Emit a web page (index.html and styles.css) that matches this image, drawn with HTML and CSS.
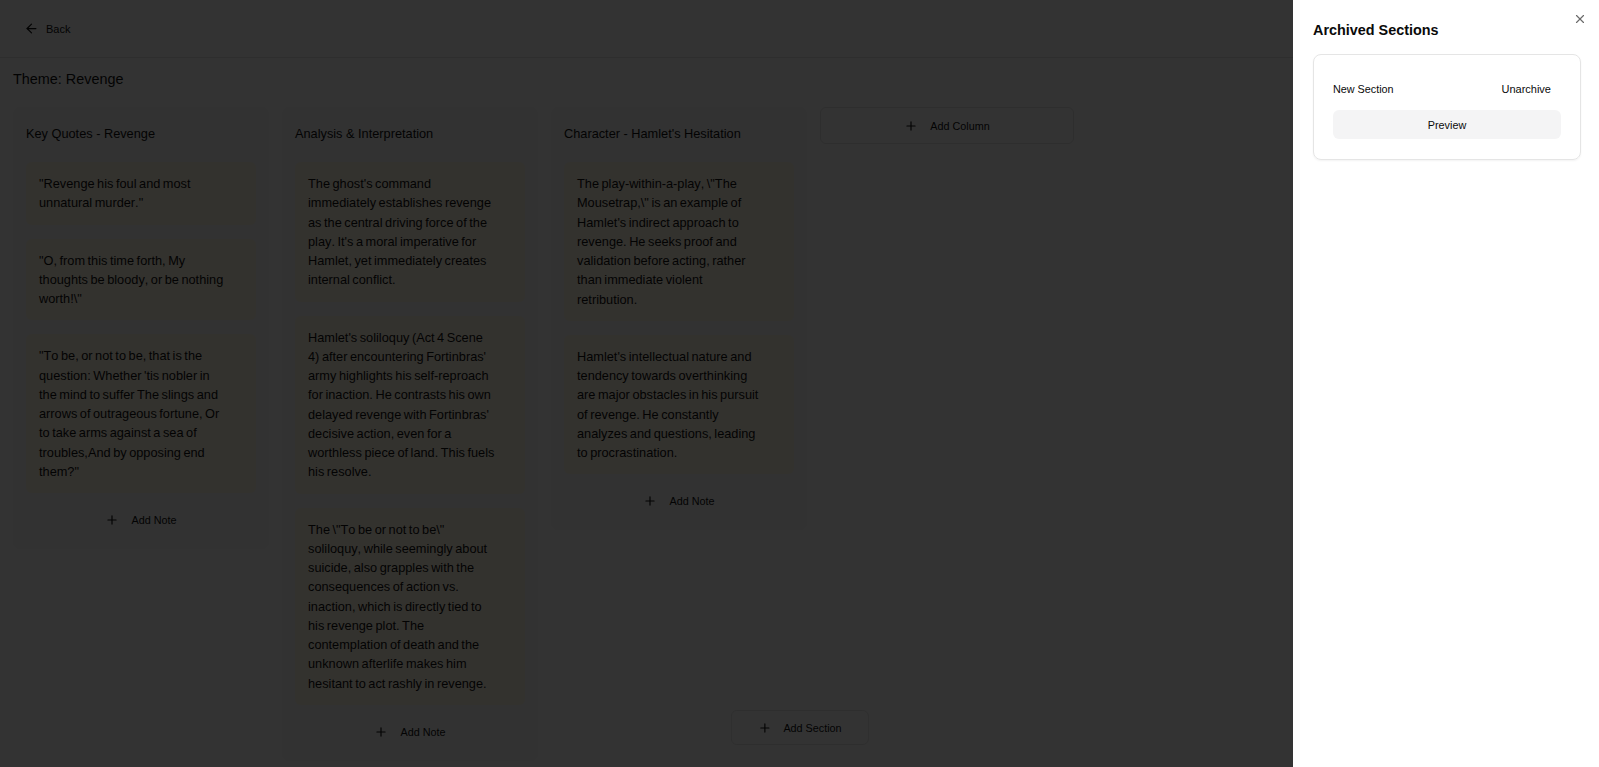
FILE: index.html
```html
<!DOCTYPE html>
<html lang="en">
<head>
<meta charset="utf-8">
<title>Theme: Revenge</title>
<link rel="stylesheet" href="styles.css">
</head>
<body>
<div class="app">
  <header class="topbar">
    <button class="back-btn" type="button">
      <svg class="icon" viewBox="0 0 24 24" width="15" height="15"><path d="m12 19-7-7 7-7"/><path d="M19 12H5"/></svg>
      <span>Back</span>
    </button>
  </header>

  <main class="board-page">
    <h1 class="theme-title">Theme: Revenge</h1>
    <div class="board">
      <section class="column">
        <h2 class="column-title">Key Quotes - Revenge</h2>
        <div class="note"><p>"Revenge his foul and most unnatural murder."</p></div>
        <div class="note"><p>"O, from this time forth, My thoughts be bloody, or be nothing worth!\"</p></div>
        <div class="note"><p>"To be, or not to be, that is the question: Whether 'tis nobler in the mind to suffer The slings and arrows of outrageous fortune, Or to take arms against a sea of troubles,And by opposing end them?"</p></div>
        <button class="add-note" type="button">
          <svg class="icon" viewBox="0 0 24 24" width="14" height="14"><path d="M5 12h14"/><path d="M12 5v14"/></svg>
          <span>Add Note</span>
        </button>
      </section>

      <section class="column">
        <h2 class="column-title">Analysis &amp; Interpretation</h2>
        <div class="note"><p>The ghost's command immediately establishes revenge as the central driving force of the play. It's a moral imperative for Hamlet, yet immediately creates internal conflict.</p></div>
        <div class="note"><p>Hamlet's soliloquy (Act 4 Scene 4) after encountering Fortinbras' army highlights his self-reproach for inaction. He contrasts his own delayed revenge with Fortinbras' decisive action, even for a worthless piece of land. This fuels his resolve.</p></div>
        <div class="note"><p>The \"To be or not to be\" soliloquy, while seemingly about suicide, also grapples with the consequences of action vs. inaction, which is directly tied to his revenge plot. The contemplation of death and the unknown afterlife makes him hesitant to act rashly in revenge.</p></div>
        <button class="add-note" type="button">
          <svg class="icon" viewBox="0 0 24 24" width="14" height="14"><path d="M5 12h14"/><path d="M12 5v14"/></svg>
          <span>Add Note</span>
        </button>
      </section>

      <section class="column">
        <h2 class="column-title">Character - Hamlet's Hesitation</h2>
        <div class="note"><p>The play-within-a-play, \"The Mousetrap,\" is an example of Hamlet's indirect approach to revenge. He seeks proof and validation before acting, rather than immediate violent retribution.</p></div>
        <div class="note"><p>Hamlet's intellectual nature and tendency towards overthinking are major obstacles in his pursuit of revenge. He constantly analyzes and questions, leading to procrastination.</p></div>
        <button class="add-note" type="button">
          <svg class="icon" viewBox="0 0 24 24" width="14" height="14"><path d="M5 12h14"/><path d="M12 5v14"/></svg>
          <span>Add Note</span>
        </button>
      </section>

      <button class="add-column" type="button">
        <svg class="icon" viewBox="0 0 24 24" width="14" height="14"><path d="M5 12h14"/><path d="M12 5v14"/></svg>
        <span>Add Column</span>
      </button>
    </div>
  </main>

  <button class="add-section" type="button">
    <svg class="icon" viewBox="0 0 24 24" width="14" height="14"><path d="M5 12h14"/><path d="M12 5v14"/></svg>
    <span>Add Section</span>
  </button>
</div>

<div class="overlay"></div>

<aside class="sheet" role="dialog" aria-label="Archived Sections">
  <h2 class="sheet-title">Archived Sections</h2>
  <button class="sheet-close" type="button" aria-label="Close">
    <svg class="icon" viewBox="0 0 24 24" width="14" height="14"><path d="M18 6 6 18"/><path d="m6 6 12 12"/></svg>
  </button>
  <div class="archive-card">
    <div class="archive-row">
      <span class="archive-name">New Section</span>
      <button class="ghost-btn" type="button">Unarchive</button>
    </div>
    <button class="preview-btn" type="button">Preview</button>
  </div>
</aside>
</body>
</html>
```
FILE: styles.css
```css
* {
  box-sizing: border-box;
}

html,
body {
  margin: 0;
  height: 100%;
}

body {
  font-family: "Liberation Sans", Arial, Helvetica, sans-serif;
  font-kerning: none;
  color: #111111;
  background: #ffffff;
  overflow: hidden;
}

button {
  font-family: inherit;
  color: inherit;
  cursor: pointer;
}

.icon {
  flex: none;
  fill: none;
  stroke: currentColor;
  stroke-width: 2;
  stroke-linecap: round;
  stroke-linejoin: round;
}

/* ---------- top bar ---------- */
.topbar {
  height: 58px;
  border-bottom: 1px solid #e5e5e5;
  display: flex;
  align-items: center;
  padding: 0 13px;
}

.back-btn {
  display: inline-flex;
  align-items: center;
  gap: 7px;
  height: 32px;
  padding: 0 11px;
  border: 0;
  background: none;
  font-size: 11px;
  font-weight: 500;
}

/* ---------- board ---------- */
.board-page {
  padding: 11px 13px 0;
}

.theme-title {
  margin: 0;
  font-size: 14.4px;
  font-weight: 400;
  line-height: 20px;
}

.board {
  display: flex;
  align-items: flex-start;
  gap: 13px;
  margin-top: 18px;
}

.column {
  flex: none;
  width: 256px;
  padding: 14px 13px 13px;
  background: #f7f7f7;
  border-radius: 7px;
  display: flex;
  flex-direction: column;
  gap: 14px;
}

.column-title {
  margin: 0 0 1px;
  font-size: 12.75px;
  font-weight: 400;
  line-height: 26px;
}

.note {
  background: #fff8e6;
  border-radius: 6px;
  padding: 12px 29.7px 12px 13px;
}

.note p {
  margin: 0;
  font-size: 12.75px;
  line-height: 19.25px;
  word-spacing: -1px;
}

.add-note {
  height: 32px;
  margin-top: -3px;
  display: flex;
  align-items: center;
  justify-content: center;
  gap: 12px;
  border: 0;
  background: none;
  font-size: 10.8px;
  font-weight: 500;
}

.add-column {
  flex: none;
  width: 254px;
  height: 37px;
  display: flex;
  align-items: center;
  justify-content: center;
  gap: 12px;
  border: 1px solid #e5e5e5;
  border-radius: 6px;
  background: #ffffff;
  font-size: 10.8px;
  font-weight: 500;
}

.add-section {
  position: fixed;
  left: 50%;
  bottom: 22px;
  transform: translateX(-50%);
  height: 35px;
  padding: 0 26px;
  display: flex;
  align-items: center;
  gap: 12px;
  border: 1px solid #e5e5e5;
  border-radius: 6px;
  background: #ffffff;
  font-size: 10.8px;
  font-weight: 500;
}

/* ---------- overlay + sheet ---------- */
.overlay {
  position: fixed;
  inset: 0;
  background: rgba(0, 0, 0, 0.8);
}

.sheet {
  position: fixed;
  top: 0;
  right: 0;
  bottom: 0;
  width: 306px;
  background: #ffffff;
  padding: 20px 18px 20px 20px;
  color: #0a0a0a;
}

.sheet-title {
  margin: 0;
  font-size: 14.4px;
  font-weight: 700;
  line-height: 20px;
}

.sheet-close {
  position: absolute;
  top: 12px;
  right: 12px;
  width: 14px;
  height: 14px;
  padding: 0;
  border: 0;
  background: none;
  display: flex;
  color: #6b6b6b;
}

.archive-card {
  margin-top: 14px;
  border: 1px solid #e5e5e5;
  border-radius: 8px;
  box-shadow: 0 1px 2px rgba(0, 0, 0, 0.05);
  padding: 19px 19px 20px;
}

.archive-row {
  height: 30px;
  display: flex;
  align-items: center;
  justify-content: space-between;
}

.archive-name {
  font-size: 10.8px;
}

.ghost-btn {
  height: 30px;
  padding: 0 10px;
  border: 0;
  background: none;
  font-size: 11px;
  font-weight: 500;
}

.preview-btn {
  display: block;
  width: 100%;
  height: 29px;
  margin-top: 6px;
  border: 0;
  border-radius: 6px;
  background: #f4f4f5;
  font-size: 10.8px;
  font-weight: 500;
}
```
